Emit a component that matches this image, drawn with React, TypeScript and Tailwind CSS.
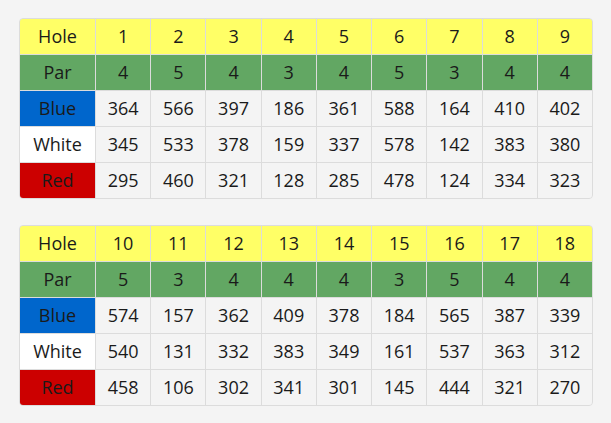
const front = {
  holes: ["1", "2", "3", "4", "5", "6", "7", "8", "9"],
  par: [4, 5, 4, 3, 4, 5, 3, 4, 4],
  blue: [364, 566, 397, 186, 361, 588, 164, 410, 402],
  white: [345, 533, 378, 159, 337, 578, 142, 383, 380],
  red: [295, 460, 321, 128, 285, 478, 124, 334, 323],
};

const back = {
  holes: ["10", "11", "12", "13", "14", "15", "16", "17", "18"],
  par: [5, 3, 4, 4, 4, 3, 5, 4, 4],
  blue: [574, 157, 362, 409, 378, 184, 565, 387, 339],
  white: [540, 131, 332, 383, 349, 161, 537, 363, 312],
  red: [458, 106, 302, 341, 301, 145, 444, 321, 270],
};

type Card = typeof front;

function Cell({ children, className }: { children: React.ReactNode; className: string }) {
  return <div className={`h-[35px] flex items-center justify-center ${className}`}>{children}</div>;
}

function Scorecard({ card }: { card: Card }) {
  return (
    <div className="w-[574px] rounded-[4px] border border-[#dcdcdc] overflow-hidden">
      <div className="grid grid-cols-[75px_repeat(9,1fr)] gap-px bg-[#dcdcdc]">
        <Cell className="bg-[#ffff66]">Hole</Cell>
        {card.holes.map((h) => (
          <Cell key={"h" + h} className="bg-[#ffff66]">{h}</Cell>
        ))}

        <Cell className="bg-[#62a763]">Par</Cell>
        {card.par.map((p, i) => (
          <Cell key={"p" + i} className="bg-[#62a763]">{p}</Cell>
        ))}

        <Cell className="bg-[#0066cc]">Blue</Cell>
        {card.blue.map((v, i) => (
          <Cell key={"b" + i} className="bg-[#f4f4f4]">{v}</Cell>
        ))}

        <Cell className="bg-white">White</Cell>
        {card.white.map((v, i) => (
          <Cell key={"w" + i} className="bg-[#f4f4f4]">{v}</Cell>
        ))}

        <Cell className="bg-[#cc0000]">Red</Cell>
        {card.red.map((v, i) => (
          <Cell key={"r" + i} className="bg-[#f4f4f4]">{v}</Cell>
        ))}
      </div>
    </div>
  );
}

export default function App() {
  return (
    <div className="min-h-[423px] w-[611px] bg-[#f4f4f4] pt-[18px] pl-[19px] font-['Open_Sans',sans-serif] text-[18px] text-[#1a1a1a]">
      <div className="flex flex-col gap-[26px]">
        <Scorecard card={front} />
        <Scorecard card={back} />
      </div>
    </div>
  );
}
